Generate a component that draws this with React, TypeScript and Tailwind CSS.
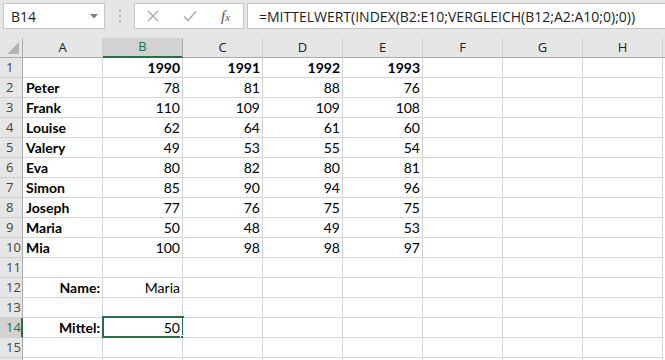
import React from "react";

const cols = ["A", "B", "C", "D", "E", "F", "G", "H"];

type Cell = { v?: string; b?: boolean; r?: boolean };

const data: Record<number, Cell[]> = {
  1: [{}, { v: "1990", b: true, r: true }, { v: "1991", b: true, r: true }, { v: "1992", b: true, r: true }, { v: "1993", b: true, r: true }],
  2: [{ v: "Peter", b: true }, { v: "78", r: true }, { v: "81", r: true }, { v: "88", r: true }, { v: "76", r: true }],
  3: [{ v: "Frank", b: true }, { v: "110", r: true }, { v: "109", r: true }, { v: "109", r: true }, { v: "108", r: true }],
  4: [{ v: "Louise", b: true }, { v: "62", r: true }, { v: "64", r: true }, { v: "61", r: true }, { v: "60", r: true }],
  5: [{ v: "Valery", b: true }, { v: "49", r: true }, { v: "53", r: true }, { v: "55", r: true }, { v: "54", r: true }],
  6: [{ v: "Eva", b: true }, { v: "80", r: true }, { v: "82", r: true }, { v: "80", r: true }, { v: "81", r: true }],
  7: [{ v: "Simon", b: true }, { v: "85", r: true }, { v: "90", r: true }, { v: "94", r: true }, { v: "96", r: true }],
  8: [{ v: "Joseph", b: true }, { v: "77", r: true }, { v: "76", r: true }, { v: "75", r: true }, { v: "75", r: true }],
  9: [{ v: "Maria", b: true }, { v: "50", r: true }, { v: "48", r: true }, { v: "49", r: true }, { v: "53", r: true }],
  10: [{ v: "Mia", b: true }, { v: "100", r: true }, { v: "98", r: true }, { v: "98", r: true }, { v: "97", r: true }],
  12: [{ v: "Name:", b: true, r: true }, { v: "Maria", r: true }],
  14: [{ v: "Mittel:", b: true, r: true }, { v: "50", r: true }],
};

const ui = { fontFamily: '"Open Sans", "Noto Sans", sans-serif' };
const cellFont = { fontFamily: 'Lato, "Liberation Sans", sans-serif' };

function Toolbar() {
  return (
    <div className="flex h-[38px] items-start bg-[#e6e6e6] pt-[3px]" style={ui}>
      <div className="ml-[3px] flex h-[26px] w-[102px] items-center justify-between border border-[#c6c6c6] bg-white pl-[7px] pr-[6px] text-[14px] text-[#222]">
        <span>B14</span>
        <svg width="8" height="5" viewBox="0 0 8 5">
          <path d="M0 0h8L4 4.5z" fill="#7a7a7a" />
        </svg>
      </div>
      <div className="ml-[14px] flex h-[26px] flex-col justify-center gap-[3px]">
        <div className="h-[2px] w-[2px] bg-[#b0b0b0]" />
        <div className="h-[2px] w-[2px] bg-[#b0b0b0]" />
        <div className="h-[2px] w-[2px] bg-[#b0b0b0]" />
      </div>
      <div className="ml-[13px] flex h-[26px] w-[110px] items-center border border-[#c6c6c6] bg-white">
        <svg className="ml-[12px]" width="12" height="12" viewBox="0 0 12 12">
          <path d="M1 1l10 10M11 1L1 11" stroke="#a8a8a8" strokeWidth="1.3" />
        </svg>
        <svg className="ml-[24px]" width="14" height="12" viewBox="0 0 14 12">
          <path d="M1 6.5l4 4L13 1.5" stroke="#a8a8a8" strokeWidth="1.5" fill="none" />
        </svg>
        <span
          className="ml-[24px] text-[15px] italic text-[#555]"
          style={{ fontFamily: '"Liberation Serif", serif' }}
        >
          f<span className="text-[11px]">x</span>
        </span>
      </div>
      <div className="ml-[3px] flex h-[26px] flex-1 items-center border border-r-0 border-[#c6c6c6] bg-white pl-[11px] text-[14px] text-[#222]">
        =MITTELWERT(INDEX(B2:E10;VERGLEICH(B12;A2:A10;0);0))
      </div>
    </div>
  );
}

function HeaderRow() {
  return (
    <div className="flex h-[20px] bg-[#e6e6e6]" style={ui}>
      <div className="relative w-[23px] shrink-0 border-r border-b border-[#ababab]">
        <svg className="absolute right-[3px] bottom-[3px]" width="12" height="12" viewBox="0 0 12 12">
          <path d="M12 0V12H0z" fill="#b4b4b4" />
        </svg>
      </div>
      {cols.map((c) =>
        c === "B" ? (
          <div
            key={c}
            className="flex w-[80px] shrink-0 items-center justify-center border-r border-b-2 border-r-[#ababab] border-b-[#217346] bg-[#d2d2d2] text-[13px] text-[#217346]"
          >
            {c}
          </div>
        ) : (
          <div
            key={c}
            className="flex w-[80px] shrink-0 items-center justify-center border-r border-b border-r-[#d0d0d0] border-b-[#ababab] text-[13px] text-[#222]"
          >
            {c}
          </div>
        )
      )}
      <div className="flex-1 border-b border-[#ababab]" />
    </div>
  );
}

function Row({ n }: { n: number }) {
  const cells = data[n] || [];
  const sel = n === 14;
  return (
    <div className="flex h-[20px]">
      <div
        className={
          sel
            ? "flex w-[23px] shrink-0 items-center border-r-2 border-b border-r-[#217346] border-b-[#d0d0d0] bg-[#d2d2d2] pl-[6px] text-[13px] text-[#217346]"
            : "flex w-[23px] shrink-0 items-center border-r border-b border-r-[#ababab] border-b-[#d0d0d0] bg-[#e6e6e6] pl-[6px] text-[13px] text-[#444]"
        }
        style={ui}
      >
        {n}
      </div>
      {cols.map((c, i) => {
        const cell = cells[i] || {};
        return (
          <div
            key={c}
            className={
              "relative flex w-[80px] shrink-0 items-center border-r border-b border-[#d4d4d4] bg-white px-[2px] text-[14px] leading-none text-black " +
              (cell.r ? "justify-end " : "justify-start pl-[3px] ") +
              (cell.b ? "font-bold" : "")
            }
            style={cellFont}
          >
            {cell.v}
            {sel && c === "B" && (
              <>
                <div className="absolute -top-[2px] -left-[1px] h-[22px] w-[82px] border-2 border-[#217346]" />
                <div className="absolute -right-[4px] -bottom-[4px] h-[6px] w-[6px] border border-white bg-[#217346]" />
              </>
            )}
          </div>
        );
      })}
      <div className="flex-1 bg-white" />
    </div>
  );
}

function TailRow() {
  return (
    <div className="flex h-[2px]">
      <div className="w-[23px] shrink-0 border-r border-[#ababab] bg-[#e6e6e6]" />
      {cols.map((c) => (
        <div key={c} className="w-[80px] shrink-0 border-r border-[#d4d4d4] bg-white" />
      ))}
      <div className="flex-1 bg-white" />
    </div>
  );
}

export default function App() {
  const rows = Array.from({ length: 15 }, (_, i) => i + 1);
  return (
    <div className="h-[360px] w-[665px] overflow-hidden bg-white">
      <Toolbar />
      <HeaderRow />
      {rows.map((n) => (
        <Row key={n} n={n} />
      ))}
      <TailRow />
    </div>
  );
}
